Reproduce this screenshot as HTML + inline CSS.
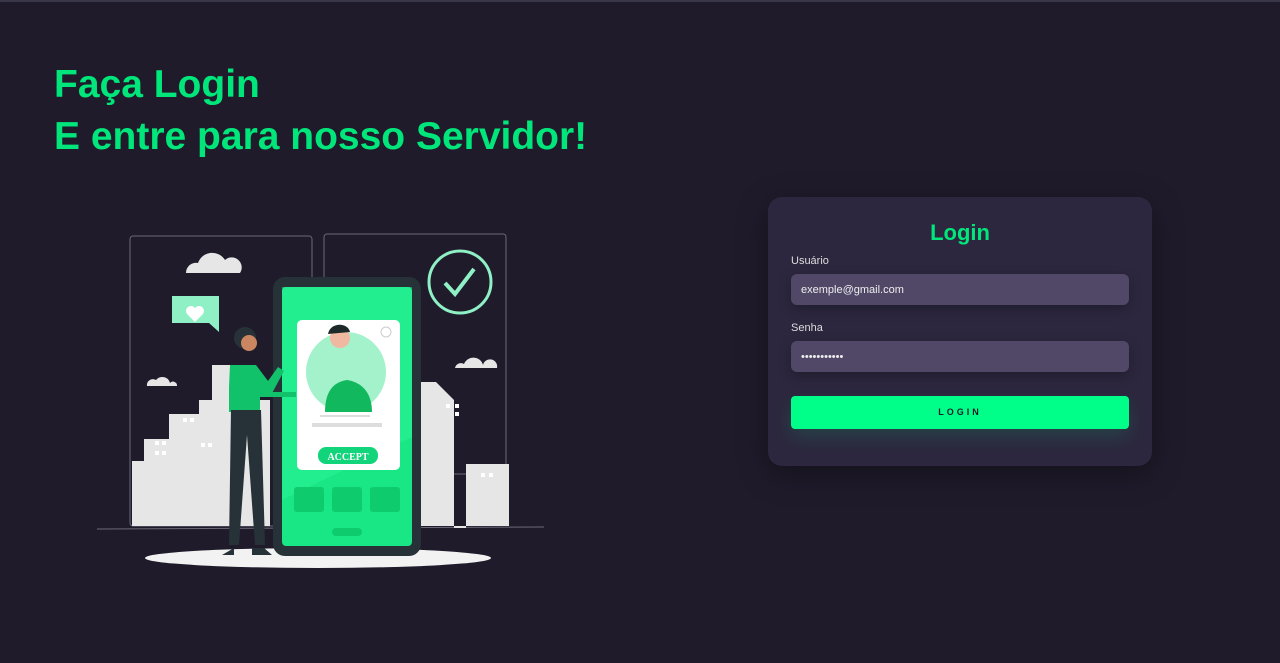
<!DOCTYPE html>
<html><head><meta charset="utf-8"><style>
*{margin:0;padding:0;box-sizing:border-box}
body{width:1280px;height:663px;background:#1f1b2b;font-family:"Liberation Sans",sans-serif;position:relative;overflow:hidden}
.top{position:absolute;left:0;top:0;width:1280px;height:2px;background:#3a3748}
h1{position:absolute;left:54px;top:59px;color:#00e67a;font-size:39px;font-weight:bold;line-height:52px}
.card{position:absolute;left:768px;top:197px;width:384px;height:269px;background:#2c273e;border-radius:14px;box-shadow:0 8px 30px rgba(0,0,0,.35)}
.card h2{position:absolute;top:23px;width:100%;text-align:center;color:#00e67a;font-size:22px}
.lab{position:absolute;left:23px;color:#ddd;font-size:11px}
.inp{position:absolute;left:23px;width:338px;height:31px;background:#514868;border-radius:6px;color:#eee;font-size:11px;padding:10px 10px;box-shadow:0 4px 12px rgba(0,0,0,.25)}
.btn{position:absolute;left:23px;top:199px;width:338px;height:33px;background:#00ff88;border-radius:4px;text-align:center;line-height:33px;font-size:9px;font-weight:bold;letter-spacing:3px;color:#1a1a2a;box-shadow:0 8px 18px rgba(0,255,136,.12)}
</style></head><body>
<div class="top"></div>
<h1>Faça Login<br>E entre para nosso Servidor!</h1>
<svg style="position:absolute;left:0;top:0" width="640" height="663">
<g fill="none" stroke="#6b6878" stroke-width="1">
<rect x="130" y="236" width="182" height="290" rx="3"/>
<rect x="324" y="234" width="182" height="240" rx="3"/>
<line x1="97" y1="529" x2="544" y2="527"/>
</g>
<g fill="#e6e6e6">
<path d="M132 526V461h12v-22h25v-25h30v-14h13v-35h28v161z"/>
<path d="M200 526V400h70v126z"/>
<path d="M420 526V382h16l18 18v128h12v-64h43v62z"/>
<path d="M186 273a10 10 0 0 1 12-10 15 15 0 0 1 27-3 10 10 0 0 1 15 13z"/>
<path d="M147 386a6 6 0 0 1 9-6 8 8 0 0 1 14 3 4 4 0 0 1 7 3z"/>
<path d="M455 368a6 6 0 0 1 9-4 10 10 0 0 1 19 1 5 5 0 0 1 14 3z"/>
</g>
<g fill="#fff"><rect x="155" y="441" width="4" height="4"/><rect x="162" y="441" width="4" height="4"/><rect x="155" y="451" width="4" height="4"/><rect x="162" y="451" width="4" height="4"/><rect x="183" y="418" width="4" height="4"/><rect x="190" y="418" width="4" height="4"/><rect x="201" y="443" width="4" height="4"/><rect x="208" y="443" width="4" height="4"/><rect x="446" y="404" width="4" height="4"/><rect x="455" y="404" width="4" height="4"/><rect x="455" y="412" width="4" height="4"/><rect x="481" y="473" width="4" height="4"/><rect x="489" y="473" width="4" height="4"/></g>
<ellipse cx="318" cy="558" rx="173" ry="10" fill="#f2f2f2"/>
<circle cx="460" cy="282" r="31" fill="none" stroke="#8ef0c4" stroke-width="3"/>
<path d="M445 283l10 11 19-25" fill="none" stroke="#8ef0c4" stroke-width="4"/>
<path d="M172 296h47v36l-10-9h-37z" fill="#8ef0c4"/>
<path d="M195 322l-8-8a5 5 0 0 1 8-6 5 5 0 0 1 8 6z" fill="#fff"/>
<rect x="273" y="277" width="148" height="279" rx="12" fill="#263238"/>
<rect x="282" y="287" width="130" height="259" rx="4" fill="#19e684"/>
<path d="M282 287h130v150L282 500z" fill="#2cf59a" opacity=".5"/>
<g fill="#0ecb6e"><rect x="294" y="487" width="30" height="25" rx="3"/><rect x="332" y="487" width="30" height="25" rx="3"/><rect x="370" y="487" width="30" height="25" rx="3"/><rect x="332" y="528" width="30" height="8" rx="4"/></g>
<rect x="297" y="320" width="103" height="150" rx="5" fill="#fff"/>
<circle cx="346" cy="372" r="40" fill="#a4f2cc"/>
<path d="M325 412c0-20 8-30 22-32 14 2 25 12 25 32z" fill="#12b85e"/>
<circle cx="340" cy="338" r="10" fill="#f0b8a0"/><path d="M328 334c2-12 20-12 22-2z" fill="#1e2a2a"/>
<rect x="312" y="423" width="70" height="4" fill="#ddd"/><rect x="320" y="415" width="50" height="2" fill="#ddd"/>
<rect x="318" y="447" width="60" height="17" rx="8" fill="#12d47a"/>
<text x="348" y="460" fill="#fff" font-size="10" font-weight="bold" text-anchor="middle" font-family="Liberation Serif,serif">ACCEPT</text>
<circle cx="386" cy="332" r="5" fill="none" stroke="#ccc"/>
<circle cx="245" cy="338" r="11" fill="#263238"/><circle cx="249" cy="343" r="8" fill="#c98660"/>
<path d="M230 365h26l12 16 10-14 6 4-14 26h-10v15h-31v-25z" fill="#12c26a"/>
<path d="M262 392l34 0v5h-34z" fill="#12c26a"/>
<path d="M231 410h30l4 135h-10l-8-110-8 110h-10z" fill="#263238"/>
<path d="M222 555l12-7v7zM252 555l20 0-8-7h-12z" fill="#263238"/>
</svg>
<div class="card">
<h2>Login</h2>
<div class="lab" style="top:58px">Usuário</div>
<div class="inp" style="top:77px">exemple@gmail.com</div>
<div class="lab" style="top:125px">Senha</div>
<div class="inp" style="top:144px">•••••••••••</div>
<div class="btn">LOGIN</div>
</div>
</body></html>
